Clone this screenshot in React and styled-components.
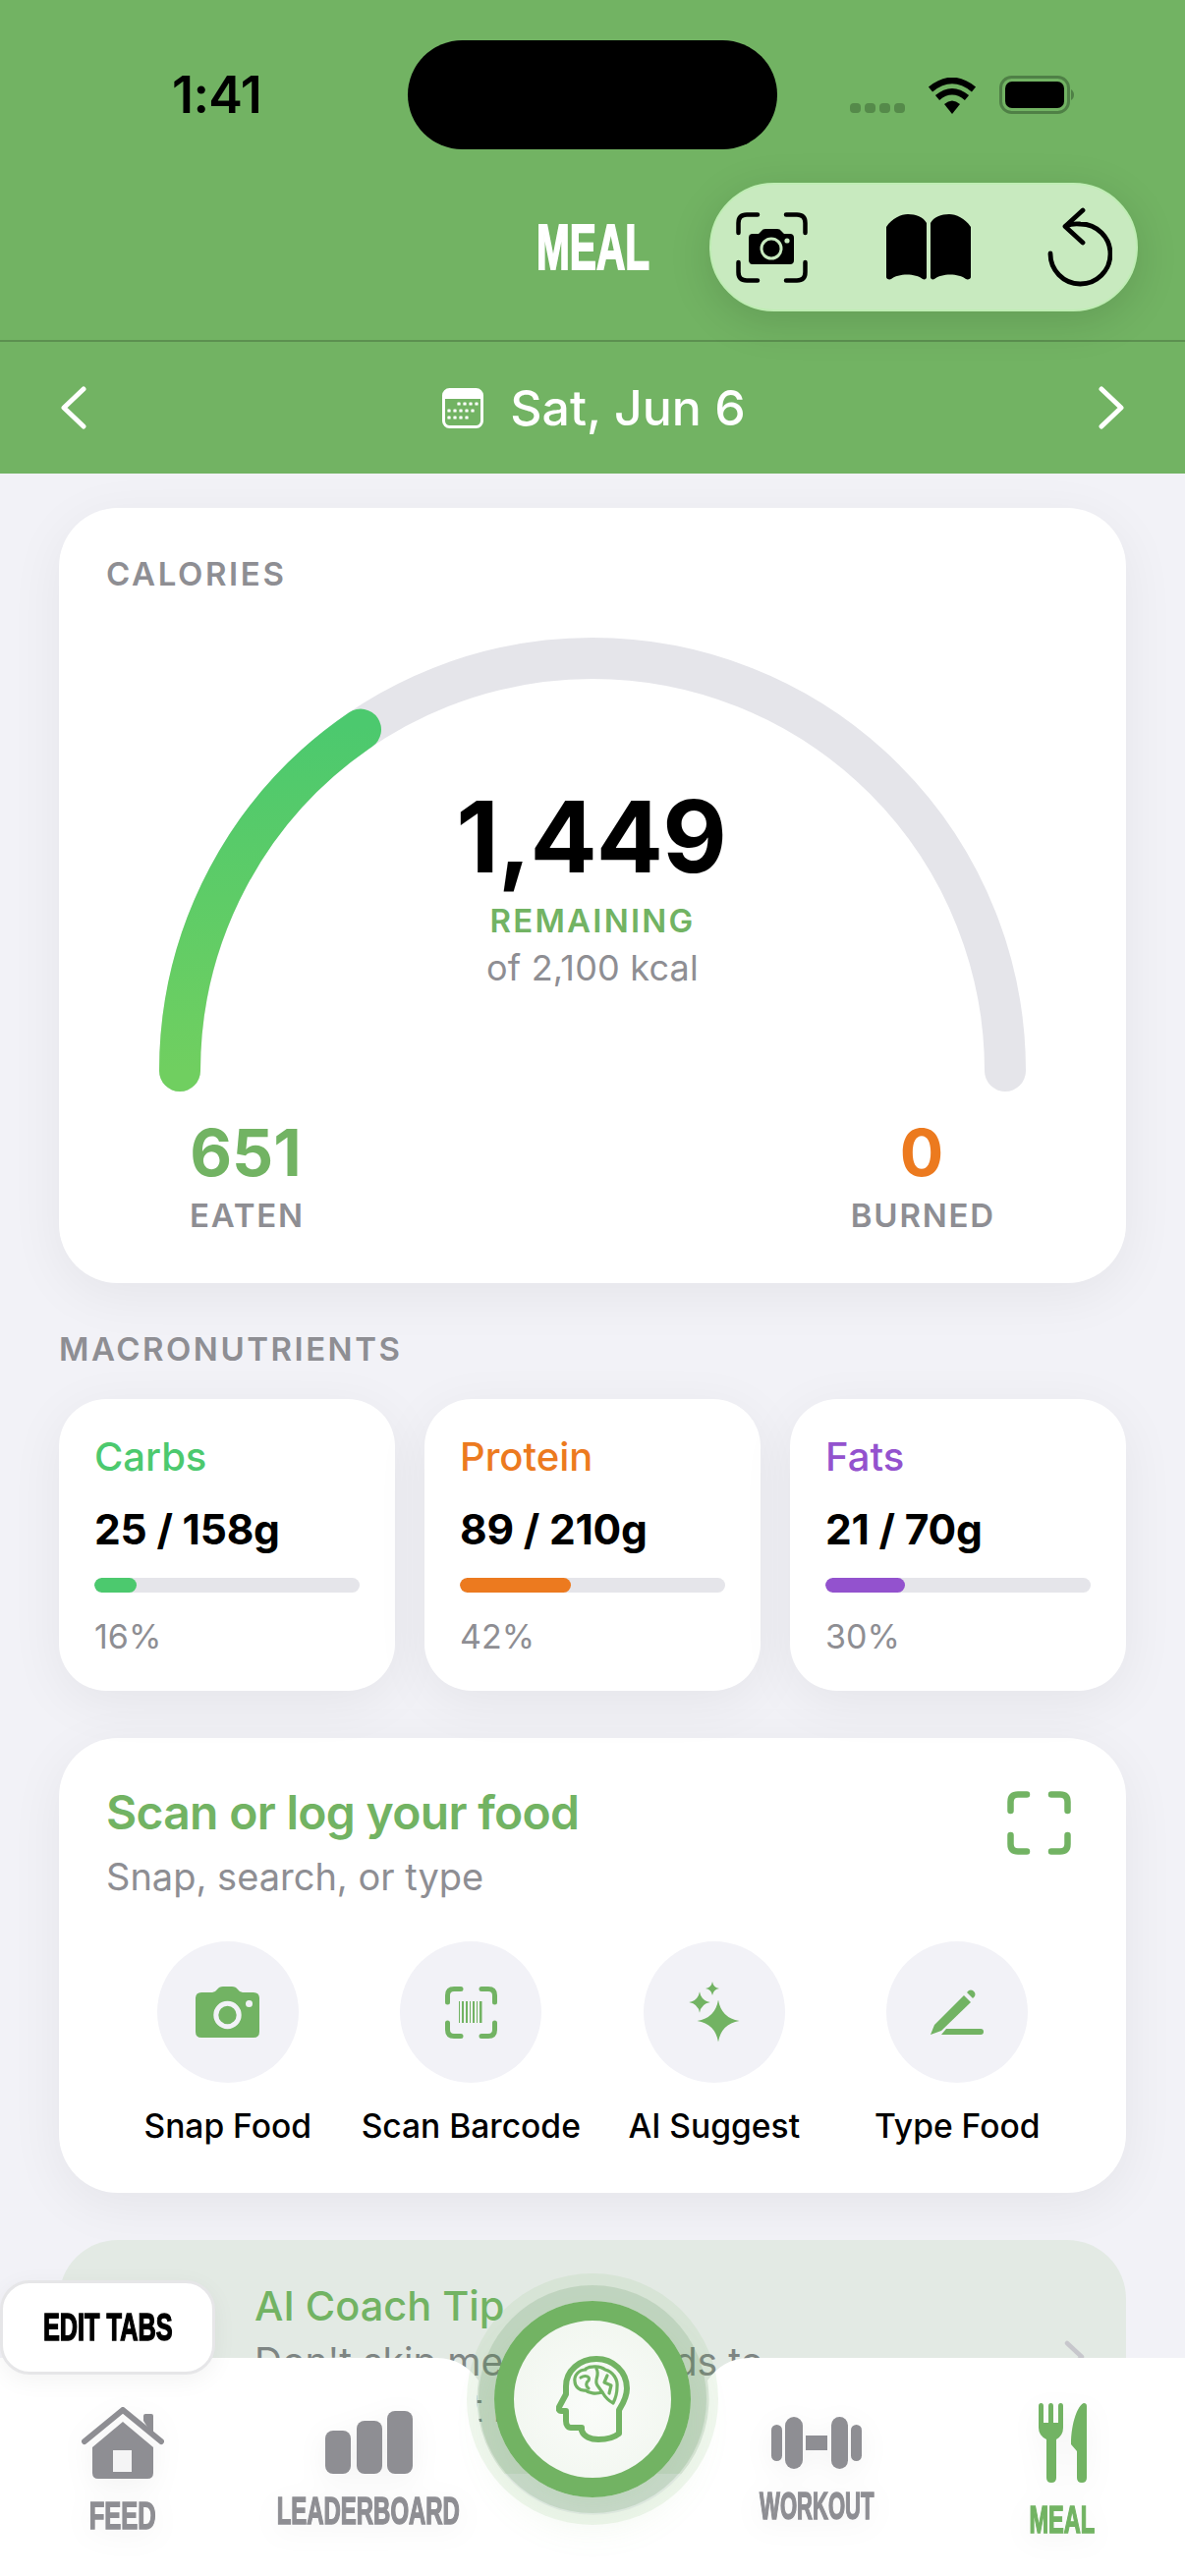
import React from "react";
import styled, { createGlobalStyle } from "styled-components";

const GREEN = "#72B363";
const GREY = "#8E8E93";
const SANS = `Inter, "Liberation Sans", sans-serif`;
const CONDENSED = `"Liberation Sans", Arial, sans-serif`;

const Global = createGlobalStyle`
  html, body { margin: 0; padding: 0; background: #F2F2F7; }
  * { box-sizing: border-box; }
`;

const Page = styled.div`
  position: relative;
  width: 1206px;
  height: 2622px;
  overflow: hidden;
  background: #F2F2F7;
  font-family: ${SANS};
`;

/* ---------- header ---------- */
const Header = styled.header`
  background: ${GREEN};
  height: 482px;
  display: flex;
  flex-direction: column;
`;
const StatusBar = styled.div`
  display: flex;
  align-items: center;
  height: 111px;
  margin-top: 41px;
`;
const Time = styled.div`
  width: 415px;
  padding-left: 175px;
  font-size: 52px;
  line-height: 36px;
  font-weight: 600;
  letter-spacing: -0.6px;
  color: #000;
`;
const Island = styled.div`
  width: 376px;
  height: 111px;
  border-radius: 56px;
  background: #000;
`;
const StatusRight = styled.div`
  display: flex;
  align-items: flex-end;
  height: 39px;
  margin-left: 74px;
  gap: 23px;
`;
const Dots = styled.div`
  display: flex;
  gap: 4px;
  align-items: flex-end;
  padding-bottom: 1px;
`;
const Dot = styled.i`
  display: block;
  width: 11px;
  height: 10px;
  border-radius: 4px;
  background: #558A4A;
`;
const TitleRow = styled.div`
  display: grid;
  grid-template-columns: 546px 115px 1fr;
  align-items: center;
  height: 196px;
  padding: 34px 48px 31px 0;
  border-bottom: 2px solid #5C9050;
`;
const HeaderTitle = styled.h1`
  grid-column: 2;
  margin: 0;
  font-family: ${CONDENSED};
  font-weight: 700;
  font-size: 64px;
  line-height: 46px;
  color: #fff;
  white-space: nowrap;
  transform: scaleX(0.635);
  transform-origin: left center;
  -webkit-text-stroke: 2px #fff;
`;
const ActionPill = styled.div`
  grid-column: 3;
  justify-self: end;
  width: 436px;
  height: 131px;
  border-radius: 66px;
  background: #C8EABF;
  border: 2px solid #BFEDB4;
  box-shadow: 0 10px 44px rgba(0, 0, 0, 0.13);
  display: flex;
  align-items: center;
  color: #000;
  padding-left: 25px;
`;
const PillSlot = styled.span`
  display: flex;
  margin-left: ${(p) => p.$ml}px;
`;
const DateRow = styled.div`
  flex: 1;
  display: flex;
  align-items: center;
  justify-content: space-between;
  padding: 0 62px;
  color: #fff;
`;
const DateGroup = styled.div`
  display: flex;
  align-items: center;
  gap: 27px;
  margin-left: 3px;
`;
const DateText = styled.span`
  font-size: 50px;
  line-height: 50px;
  font-weight: 500;
  letter-spacing: 0;
`;

/* ---------- content ---------- */
const Main = styled.main`
  padding: 35px 60px 0;
`;
const Card = styled.section`
  background: #fff;
  border-radius: 60px;
  box-shadow: 0 12px 56px rgba(0, 0, 0, 0.06);
`;
const CaloriesCard = styled(Card)`
  height: 789px;
  padding-top: 49px;
`;
const Overline = styled.div`
  font-size: 33px;
  line-height: 36px;
  font-weight: 600;
  letter-spacing: 2.6px;
  color: ${GREY};
  padding-left: 48px;
`;
const Gauge = styled.div`
  display: grid;
  width: 882px;
  height: 463px;
  margin: 47px 0 0 102px;
  & > * { grid-area: 1 / 1; }
`;
const GaugeCentre = styled.div`
  display: flex;
  flex-direction: column;
  align-items: center;
  padding-top: 152px;
`;
const BigNumber = styled.div`
  font-size: 101px;
  line-height: 100px;
  font-weight: 700;
  letter-spacing: -1px;
  color: #000;
  margin-left: -3px;
`;
const Remaining = styled.div`
  font-size: 33px;
  line-height: 33px;
  font-weight: 600;
  letter-spacing: 2.2px;
  color: ${GREEN};
  margin-top: 20px;
`;
const OfKcal = styled.div`
  font-size: 36px;
  line-height: 36px;
  letter-spacing: 0.2px;
  color: ${GREY};
  margin-top: 13px;
`;
const StatRow = styled.div`
  display: flex;
  justify-content: space-between;
  padding: 0 133px 0 133px;
  margin-top: 28px;
`;
const Stat = styled.div`
  display: flex;
  flex-direction: column;
  align-items: center;
  gap: 15px;
`;
const StatValue = styled.div`
  font-size: 66px;
  line-height: 66px;
  font-weight: 700;
  margin-left: -3px;
  color: ${(p) => p.$color};
`;
const StatLabel = styled.div`
  font-size: 33px;
  line-height: 33px;
  font-weight: 600;
  letter-spacing: 1.8px;
  color: ${GREY};
`;
const SectionLabel = styled.div`
  font-size: 33px;
  line-height: 33px;
  font-weight: 600;
  letter-spacing: 2.5px;
  color: ${GREY};
  margin: 51px 0 34px;
`;
const MacroGrid = styled.div`
  display: grid;
  grid-template-columns: repeat(3, 1fr);
  gap: 30px;
`;
const MacroCard = styled(Card)`
  height: 297px;
  border-radius: 48px;
  padding: 39px 36px;
`;
const MacroName = styled.div`
  font-size: 40px;
  line-height: 39px;
  font-weight: 500;
  color: ${(p) => p.$color};
`;
const MacroValue = styled.div`
  font-size: 42.5px;
  line-height: 42px;
  font-weight: 700;
  letter-spacing: -0.2px;
  color: #000;
  margin-top: 34px;
`;
const Track = styled.div`
  height: 15px;
  border-radius: 8px;
  background: #E5E5EA;
  margin-top: 28px;
  overflow: hidden;
`;
const Fill = styled.div`
  height: 100%;
  border-radius: 8px;
  background: ${(p) => p.$color};
`;
const MacroPct = styled.div`
  font-size: 34px;
  line-height: 33px;
  color: ${GREY};
  margin-top: 28px;
`;
const ScanCard = styled(Card)`
  height: 463px;
  margin-top: 48px;
  padding-top: 52px;
`;
const ScanHead = styled.div`
  display: flex;
  justify-content: space-between;
  align-items: flex-start;
  padding: 0 56px 0 48px;
`;
const ScanTitle = styled.div`
  font-size: 48px;
  line-height: 48px;
  font-weight: 600;
  letter-spacing: -0.7px;
  color: ${GREEN};
`;
const ScanSub = styled.div`
  font-size: 38px;
  line-height: 38px;
  color: ${GREY};
  margin-top: 22px;
`;
const ScanCorner = styled.span`
  display: flex;
  margin-top: 2px;
`;
const ActionGrid = styled.div`
  display: grid;
  grid-template-columns: repeat(4, 1fr);
  padding: 0 48px;
  margin-top: 47px;
`;
const Action = styled.div`
  display: flex;
  flex-direction: column;
  align-items: center;
  gap: 27px;
`;
const ActionCircle = styled.div`
  width: 144px;
  height: 144px;
  border-radius: 50%;
  background: #F2F2F7;
  color: ${GREEN};
  display: flex;
  align-items: center;
  justify-content: center;
`;
const ActionLabel = styled.div`
  font-size: 33.6px;
  line-height: 33px;
  font-weight: 500;
  color: #000;
  white-space: nowrap;
`;
const TipCard = styled.section`
  height: 238px;
  margin-top: 48px;
  border-radius: 60px;
  background: #E3EAE4;
  display: flex;
  padding: 0 42px 0 199px;
`;
const TipBody = styled.div`
  flex: 1;
  padding-top: 44px;
`;
const TipTitle = styled.div`
  font-size: 41.5px;
  line-height: 46px;
  font-weight: 500;
  color: ${GREEN};
`;
const TipText = styled.div`
  font-size: 39px;
  line-height: 47px;
  color: #7E8583;
  margin-top: 10px;
  width: 560px;
`;
const TipChevron = styled.span`
  display: flex;
  align-self: center;
  color: #C7C7CC;
`;

/* ---------- bottom bar ---------- */
const EditTabs = styled.button`
  position: absolute;
  left: 0;
  bottom: 205px;
  z-index: 3;
  width: 219px;
  height: 96px;
  padding: 0 0 0 41px;
  border-radius: 30px;
  border: 3px solid #E6E6E8;
  background: #fff;
  box-shadow: 0 6px 24px rgba(0, 0, 0, 0.05);
  display: flex;
  align-items: center;
`;
const Condensed = styled.span`
  display: block;
  font-family: ${CONDENSED};
  font-weight: 700;
  font-size: 38px;
  line-height: 27px;
  white-space: nowrap;
  color: ${(p) => p.$color};
  transform: scaleX(${(p) => p.$sx});
  -webkit-text-stroke: 1.5px ${(p) => p.$color};
`;
const EditLabel = styled(Condensed)`
  transform-origin: left center;
`;
const BottomNav = styled.nav`
  position: absolute;
  left: 0;
  right: 0;
  bottom: 0;
  height: 222px;
  padding-top: 2px;
  z-index: 1;
  background: #fff;
  display: grid;
  grid-template-columns: 250px 250px 1fr 250px 250px;
  align-items: center;
  clip-path: path("M0 0 H445 C463 0 477 9 487 23 A118 118 0 1 0 720 23 C730 9 744 0 762 0 H1206 V222 H0 Z");
`;
const NavItem = styled.div`
  grid-column: ${(p) => p.$col};
  display: flex;
  flex-direction: column;
  align-items: center;
  gap: 25px;
  filter: drop-shadow(0 6px 14px rgba(0, 0, 0, 0.05));
`;
const CoachButton = styled.button`
  position: absolute;
  left: 503px;
  bottom: 80px;
  z-index: 2;
  width: 200px;
  height: 200px;
  padding: 0;
  border-radius: 50%;
  border: 20px solid ${GREEN};
  background: radial-gradient(circle at 50% 55%, #FAFCF9 0%, #EFF5ED 100%);
  color: ${GREEN};
  display: flex;
  align-items: center;
  justify-content: center;
  box-shadow:
    0 0 0 16px rgba(60, 120, 60, 0.14),
    0 0 0 28px rgba(114, 179, 99, 0.11),
    0 24px 44px rgba(114, 179, 99, 0.12);
`;

/* ---------- icons ---------- */
const Wifi = () => (
  <svg width="50" height="37" viewBox="0 0 50 37">
    <path d="M25 37 L17 27 Q25 20 33 27 Z" fill="#000" />
    <path d="M10 20.5 Q25 8 40 20.5" fill="none" stroke="#000" strokeWidth="6.5" />
    <path d="M3 12 Q25 -6 47 12" fill="none" stroke="#000" strokeWidth="6.5" />
  </svg>
);
const Battery = () => (
  <svg width="76" height="39" viewBox="0 0 76 39">
    <rect x="1.5" y="1.5" width="69" height="36" rx="11" fill="none" stroke="#4F8046" strokeWidth="3" />
    <rect x="6" y="6" width="60" height="27" rx="7" fill="#000" />
    <path d="M73 14 Q76 16 76 19.5 Q76 23 73 25 Z" fill="#4F8046" />
  </svg>
);
const CameraViewfinder = () => (
  <svg width="73" height="72" viewBox="0 0 73 72">
    <g fill="none" stroke="currentColor" strokeWidth="4.5" strokeLinecap="round">
      <path d="M2.5 21 V11 Q2.5 2.5 11 2.5 H22" />
      <path d="M51 2.5 H62 Q70.5 2.5 70.5 11 V21" />
      <path d="M2.5 51 V61 Q2.5 69.5 11 69.5 H22" />
      <path d="M51 69.5 H62 Q70.5 69.5 70.5 61 V51" />
    </g>
    <path d="M17 22 H23 L26 19 Q27 17 30 17 H42 Q45 17 46 19 L49 22 H55 Q59 22 59 26 V49 Q59 53 55 53 H17 Q13 53 13 49 V26 Q13 22 17 22 Z" fill="currentColor" />
    <circle cx="36" cy="37" r="10" fill="none" stroke="#C8EABF" strokeWidth="3" />
    <circle cx="52" cy="29" r="2.6" fill="#C8EABF" />
  </svg>
);
const Book = () => (
  <svg width="86" height="69" viewBox="0 0 86 69" fill="currentColor">
    <path d="M0 14 C6 5 15 1 22 1 C30 1 38 4 41 10 V65 C41 67 39 68 37 67 C30 61 12 61 5 67 C3 68 0 67 0 65 Z" />
    <path d="M86 14 C80 5 71 1 64 1 C56 1 48 4 45 10 V65 C45 67 47 68 49 67 C56 61 74 61 81 67 C83 68 86 67 86 65 Z" />
  </svg>
);
const Undo = () => (
  <svg width="66" height="81" viewBox="0 0 66 81" fill="none" stroke="currentColor" strokeWidth="4.8" strokeLinecap="round" strokeLinejoin="round">
    <path d="M3 47 A30.5 30.5 0 1 0 33.5 17 C28 16.5 23 17 19 19" />
    <path d="M36 3 L18 19.5 L36 36" />
  </svg>
);
const Chevron = ({ flip }) => (
  <svg width="27" height="44" viewBox="0 0 27 44" fill="none" stroke="#fff" strokeWidth="5" strokeLinecap="round" strokeLinejoin="round">
    <path d={flip ? "M4 3 L24 22 L4 41" : "M23 3 L3 22 L23 41"} />
  </svg>
);
const CalendarIcon = () => (
  <svg width="42" height="41" viewBox="0 0 42 41">
    <rect x="1.5" y="1.5" width="39" height="38" rx="6" fill="none" stroke="#fff" strokeWidth="3" />
    <path d="M2 7 Q2 1 8 1 H34 Q40 1 40 7 V11 H2 Z" fill="#fff" />
    <g fill="#fff">
      {[[17, 16], [23, 16], [29, 16], [35, 16], [7, 23], [13, 23], [19, 23], [25, 23], [31, 23], [7, 30], [13, 30], [19, 30], [25, 30]].map(([x, y]) => (
        <rect key={`${x}-${y}`} x={x - 1.6} y={y - 1.6} width="3.2" height="3.2" rx="0.6" />
      ))}
    </g>
  </svg>
);
const Gaugeline = () => (
  <svg width="882" height="463" viewBox="0 0 882 463" fill="none">
    <defs>
      <linearGradient id="gaugeFill" gradientUnits="userSpaceOnUse" x1="0" y1="441" x2="0" y2="90">
        <stop offset="0" stopColor="#70CF60" />
        <stop offset="1" stopColor="#4CC96E" />
      </linearGradient>
    </defs>
    <path d="M21 441 A420 420 0 0 1 861 441" stroke="#E5E5EA" strokeWidth="42" strokeLinecap="round" />
    <path d="M21 441 A420 420 0 0 1 205 93.6" stroke="url(#gaugeFill)" strokeWidth="42" strokeLinecap="round" />
  </svg>
);
const FocusCorners = () => (
  <svg width="65" height="65" viewBox="0 0 65 65" fill="none" stroke={GREEN} strokeWidth="6.5" strokeLinecap="round">
    <path d="M3.5 20 V11 Q3.5 3.5 11 3.5 H20" />
    <path d="M45 3.5 H54 Q61.5 3.5 61.5 11 V20" />
    <path d="M3.5 45 V54 Q3.5 61.5 11 61.5 H20" />
    <path d="M45 61.5 H54 Q61.5 61.5 61.5 54 V45" />
  </svg>
);
const SnapIcon = () => (
  <svg width="65" height="52" viewBox="0 0 65 52">
    <path d="M6 6 H17 Q20 6 22 3 Q24 0 28 0 H37 Q41 0 43 3 Q45 6 48 6 H59 Q65 6 65 12 V46 Q65 52 59 52 H6 Q0 52 0 46 V12 Q0 6 6 6 Z" fill="currentColor" />
    <circle cx="32.5" cy="29" r="11.7" fill="none" stroke="#F2F2F7" strokeWidth="5" />
    <circle cx="54.5" cy="17.5" r="3.5" fill="#F2F2F7" />
  </svg>
);
const BarcodeIcon = () => (
  <svg width="53" height="53" viewBox="0 0 53 53" fill="none">
    <g stroke="currentColor" strokeWidth="5" strokeLinecap="round">
      <path d="M2.5 16 V9 Q2.5 2.5 9 2.5 H16" />
      <path d="M37 2.5 H44 Q50.5 2.5 50.5 9 V16" />
      <path d="M2.5 37 V44 Q2.5 50.5 9 50.5 H16" />
      <path d="M37 50.5 H44 Q50.5 50.5 50.5 44 V37" />
    </g>
    <g fill="currentColor">
      {[[14, 1], [17, 2], [21, 2], [25, 1], [28, 2], [32, 1], [35, 2.5]].map(([x, w]) => (
        <rect key={x} x={x} y="15" width={w} height="22" />
      ))}
    </g>
  </svg>
);
const star = (cx, cy, r) => {
  const k = r * 0.14;
  return `M${cx} ${cy - r} Q${cx + k} ${cy - k} ${cx + r} ${cy} Q${cx + k} ${cy + k} ${cx} ${cy + r} Q${cx - k} ${cy + k} ${cx - r} ${cy} Q${cx - k} ${cy - k} ${cx} ${cy - r} Z`;
};
const SparkleIcon = () => (
  <svg width="52" height="62" viewBox="0 0 52 62" fill="currentColor">
    <path d={star(30, 40, 21.5)} />
    <path d={star(11, 21, 10.8)} />
    <path d={star(24, 7, 7)} />
  </svg>
);
const PencilIcon = () => (
  <svg width="54" height="46" viewBox="0 0 54 46" fill="currentColor">
    <path d="M0 46 L4 36 L34 6 L41 13 L11 42 Z" />
    <path d="M37 3 L39 1 Q41 0 43 1 L45 3 Q46 5 45 7 L43 9 Z" />
    <path d="M11 46 L16 40 H51 Q54 40 54 43 Q54 46 51 46 Z" />
  </svg>
);
const House = () => (
  <svg width="84" height="73" viewBox="0 0 84 73">
    <path d="M63 14 V9 Q63 7 65 7 H71 Q73 7 73 9 V30 Z" fill={GREY} />
    <path d="M3 35 L42 3 L81 35" fill="none" stroke={GREY} strokeWidth="6" strokeLinecap="round" strokeLinejoin="round" />
    <path d="M42 15 L73 41 V67 Q73 73 67 73 H17 Q11 73 11 67 V41 Z" fill={GREY} />
    <rect x="32" y="44" width="19" height="22" fill="#F4F4F5" />
  </svg>
);
const Bars = () => (
  <svg width="89" height="64" viewBox="0 0 89 64" fill={GREY}>
    <rect x="0" y="20" width="26" height="44" rx="8" />
    <rect x="32" y="10" width="26" height="54" rx="8" />
    <rect x="63" y="0" width="26" height="64" rx="8" />
  </svg>
);
const Dumbbell = () => (
  <svg width="92" height="53" viewBox="0 0 92 53" fill={GREY}>
    <rect x="0" y="8" width="11" height="37" rx="5.5" />
    <rect x="14" y="0" width="18" height="53" rx="9" />
    <rect x="35" y="19" width="22" height="15" />
    <rect x="61" y="0" width="17" height="53" rx="8.5" />
    <rect x="81" y="8" width="11" height="37" rx="5.5" />
  </svg>
);
const Cutlery = () => (
  <svg width="49" height="81" viewBox="0 0 49 81" fill={GREEN}>
    <path d="M0 3 Q0 0 2.5 0 Q5 0 5 3 V20 H10 V3 Q10 0 12.5 0 Q15 0 15 3 V20 H20 V3 Q20 0 22.5 0 Q25 0 25 3 V25 Q25 33 18 37 V76 Q18 81 13 81 Q8 81 8 76 V37 Q0 33 0 25 Z" />
    <path d="M49 3 Q49 0 46 0 C40 2 33 20 33 42 L39 49 V76 Q39 81 44 81 Q49 81 49 76 Z" />
  </svg>
);
const BrainHead = () => (
  <svg width="75" height="89" viewBox="0 0 75 89" fill="none" stroke="currentColor" strokeLinecap="round" strokeLinejoin="round">
    <path strokeWidth="6" d="M41 3 C58 3 72 16 72 33 C72 43 67 50 64 55 V79 C58 84 50 85 43 85 C35 85 28 82 26 76 V73 H15 C12 73 10 70 10 66 V56 H5 C3 56 2 54 3 52 L10 39 V31 C10 15 24 3 41 3 Z" />
    <path strokeWidth="3.2" d="M30 13 C35 10 45 10 50 14 C58 16 63 24 62 32 C62 38 60 44 58 48 C54 46 50 42 47 37 C40 39 33 38 30 35 C24 36 19 31 19 26 C18 20 23 14 30 14 Z" />
    <path strokeWidth="3.2" d="M25 22 C30 19 35 21 33 25 C30 27 30 31 33 33 M41 13 C45 20 38 24 42 30 L47 37 M52 20 L49 27 L56 30 L54 38" />
  </svg>
);
const SmallChevron = () => (
  <svg width="21" height="34" viewBox="0 0 21 34" fill="none" stroke="currentColor" strokeWidth="4.5" strokeLinecap="round" strokeLinejoin="round">
    <path d="M3 3 L18 17 L3 31" />
  </svg>
);

const macros = [
  { name: "Carbs", value: "25 / 158g", pct: 16, color: "#4CC96E" },
  { name: "Protein", value: "89 / 210g", pct: 42, color: "#EC7A1F" },
  { name: "Fats", value: "21 / 70g", pct: 30, color: "#9352CE" },
];
const actions = [
  { label: "Snap Food", Icon: SnapIcon },
  { label: "Scan Barcode", Icon: BarcodeIcon },
  { label: "AI Suggest", Icon: SparkleIcon },
  { label: "Type Food", Icon: PencilIcon },
];
const tabs = [
  { col: 1, label: "FEED", Icon: House, sx: 0.67, color: GREY },
  { col: 2, label: "LEADERBOARD", Icon: Bars, sx: 0.63, color: GREY },
  { col: 4, label: "WORKOUT", Icon: Dumbbell, sx: 0.58, color: GREY },
  { col: 5, label: "MEAL", Icon: Cutlery, sx: 0.62, color: GREEN },
];

export default function App() {
  return (
    <Page>
      <Global />
      <Header>
        <StatusBar>
          <Time>1:41</Time>
          <Island />
          <StatusRight>
            <Dots><Dot /><Dot /><Dot /><Dot /></Dots>
            <Wifi />
            <Battery />
          </StatusRight>
        </StatusBar>
        <TitleRow>
          <HeaderTitle>MEAL</HeaderTitle>
          <ActionPill>
            <CameraViewfinder />
            <PillSlot $ml={80}><Book /></PillSlot>
            <PillSlot $ml={78}><Undo /></PillSlot>
          </ActionPill>
        </TitleRow>
        <DateRow>
          <Chevron />
          <DateGroup>
            <CalendarIcon />
            <DateText>Sat, Jun 6</DateText>
          </DateGroup>
          <Chevron flip />
        </DateRow>
      </Header>
      <Main>
        <CaloriesCard>
          <Overline>CALORIES</Overline>
          <Gauge>
            <Gaugeline />
            <GaugeCentre>
              <BigNumber>1,449</BigNumber>
              <Remaining>REMAINING</Remaining>
              <OfKcal>of 2,100 kcal</OfKcal>
            </GaugeCentre>
          </Gauge>
          <StatRow>
            <Stat>
              <StatValue $color={GREEN}>651</StatValue>
              <StatLabel>EATEN</StatLabel>
            </Stat>
            <Stat>
              <StatValue $color="#EC7A1F">0</StatValue>
              <StatLabel>BURNED</StatLabel>
            </Stat>
          </StatRow>
        </CaloriesCard>
        <SectionLabel>MACRONUTRIENTS</SectionLabel>
        <MacroGrid>
          {macros.map((m) => (
            <MacroCard key={m.name}>
              <MacroName $color={m.color}>{m.name}</MacroName>
              <MacroValue>{m.value}</MacroValue>
              <Track><Fill $color={m.color} style={{ width: `${m.pct}%` }} /></Track>
              <MacroPct>{m.pct}%</MacroPct>
            </MacroCard>
          ))}
        </MacroGrid>
        <ScanCard>
          <ScanHead>
            <div>
              <ScanTitle>Scan or log your food</ScanTitle>
              <ScanSub>Snap, search, or type</ScanSub>
            </div>
            <ScanCorner><FocusCorners /></ScanCorner>
          </ScanHead>
          <ActionGrid>
            {actions.map(({ label, Icon }) => (
              <Action key={label}>
                <ActionCircle><Icon /></ActionCircle>
                <ActionLabel>{label}</ActionLabel>
              </Action>
            ))}
          </ActionGrid>
        </ScanCard>
        <TipCard>
          <TipBody>
            <TipTitle>AI Coach Tip</TipTitle>
            <TipText>Don't skip meals, it builds to your body at its best</TipText>
          </TipBody>
          <TipChevron><SmallChevron /></TipChevron>
        </TipCard>
      </Main>
      <EditTabs>
        <EditLabel $sx={0.665} $color="#000">EDIT TABS</EditLabel>
      </EditTabs>
      <BottomNav>
        {tabs.map(({ col, label, Icon, sx, color }) => (
          <NavItem key={label} $col={col}>
            <Icon />
            <Condensed $sx={sx} $color={color}>{label}</Condensed>
          </NavItem>
        ))}
      </BottomNav>
      <CoachButton><BrainHead /></CoachButton>
    </Page>
  );
}
